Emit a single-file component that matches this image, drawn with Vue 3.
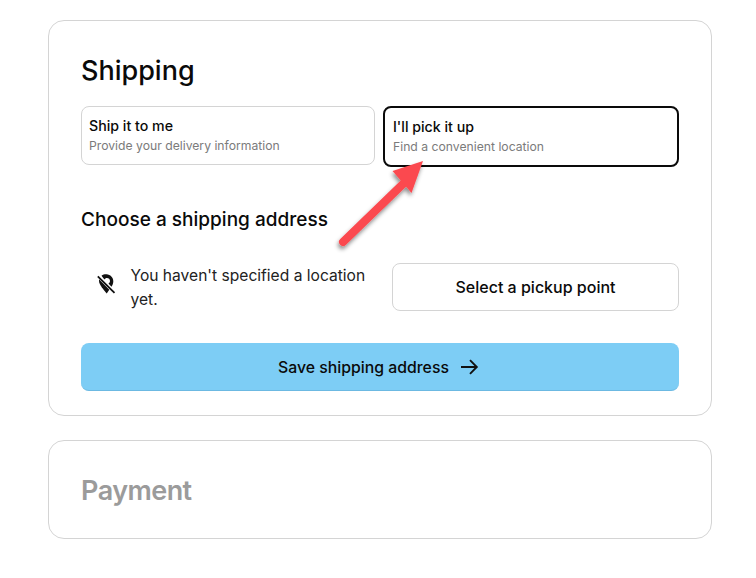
<script setup>
const options = [
  { title: 'Ship it to me', sub: 'Provide your delivery information', active: false },
  { title: "I'll pick it up", sub: 'Find a convenient location', active: true },
]
</script>

<template>
  <div class="page">
    <section class="card shipping">
      <h2 class="title">Shipping</h2>
      <div class="options">
        <div v-for="o in options" :key="o.title" class="option" :class="{ active: o.active }">
          <div class="opt-title">{{ o.title }}</div>
          <div class="opt-sub">{{ o.sub }}</div>
        </div>
      </div>
      <h3 class="subtitle">Choose a shipping address</h3>
      <div class="pickup">
        <div class="notice">
          <svg class="pin" width="20" height="20" viewBox="0 0 20 20">
            <path d="M5.500 1.800C7 .6 8.800.2 10.500.3c3.900.2 6.800 3.200 6.800 6.900 0 2-.8 3.900-1.800 5.500l-3.100-3.200c1-.5 1.600-1.500 1.600-2.600 0-1.700-1.400-3-3-3-1.100 0-2.100.6-2.600 1.500z" fill="#111" />
            <path d="M3 5.300l10.300 10.500-2.600 3.600C7.500 15.800 3.200 10.500 3 7z" fill="#111" />
            <path d="M1.800 2.300L18.500 18.800" stroke="#111" stroke-width="1.800" fill="none" />
          </svg>
          <p class="notice-text">You haven't specified a location yet.</p>
        </div>
        <button class="select-btn">Select a pickup point</button>
      </div>
      <button class="save-btn">
        <span>Save shipping address</span>
        <svg class="arrow" width="20" height="20" viewBox="0 0 20 20" fill="none" stroke="#111" stroke-width="1.900">
          <path d="M2 10h16M11 3.200L17.800 10 11 16.800" />
        </svg>
      </button>
    </section>
    <section class="card payment">
      <h2 class="title muted">Payment</h2>
    </section>
    <svg class="annotation" width="756" height="578" viewBox="0 0 756 578">
      <defs>
        <filter id="sh" x="-30%" y="-30%" width="160%" height="160%">
          <feDropShadow dx="-1" dy="3" stdDeviation="2" flood-color="#000" flood-opacity="0.45" />
        </filter>
      </defs>
      <g filter="url(#sh)">
        <path d="M343 242L404 183" stroke="#fb4a4f" stroke-width="8" stroke-linecap="round" fill="none" />
        <path d="M423 161L392.500 171 411.500 193z" fill="#fb4a4f" />
      </g>
    </svg>
  </div>
</template>

<style scoped>
.page {
  position: relative;
  width: 756px;
  height: 578px;
  box-sizing: border-box;
  padding: 20px 44px 0 48px;
  background: #fff;
  font-family: Inter, "Liberation Sans", sans-serif;
  color: #111;
  overflow: hidden;
}
.card {
  box-sizing: border-box;
  border: 1px solid #d4d4d4;
  border-radius: 16px;
}
.shipping {
  height: 396px;
  padding: 32px 32px 0;
  margin-bottom: 24px;
}
.payment {
  height: 99px;
  padding: 32px 32px 0;
}
.title {
  margin: 0;
  font-size: 27px;
  line-height: 36px;
  font-weight: 500;
  letter-spacing: 0;
  color: #0a0a0a;
}
.muted {
  color: #9b9b9b;
  font-weight: 600;
  letter-spacing: -0.55px;
}
.options {
  display: flex;
  align-items: flex-start;
  gap: 8px;
  margin-top: 17px;
}
.option {
  flex: none;
  box-sizing: border-box;
  width: 294px;
  height: 59px;
  padding: 9px 7px;
  border: 1px solid #d4d4d4;
  border-radius: 8px;
}
.option.active {
  width: 296px;
  height: 61px;
  border: 2px solid #0a0a0a;
  padding: 9px 8px;
}
.opt-title {
  font-size: 14.200px;
  line-height: 19px;
  font-weight: 500;
  color: #0a0a0a;
}
.opt-sub {
  margin-top: 2px;
  font-size: 12.200px;
  line-height: 18px;
  color: #7b7b7b;
}
.subtitle {
  margin: 0;
  margin-top: 39px;
  font-size: 19px;
  line-height: 28px;
  font-weight: 500;
  letter-spacing: 0.02px;
  color: #0a0a0a;
}
.pickup {
  display: flex;
  align-items: center;
  gap: 8px;
  height: 48px;
  margin-top: 29px;
}
.notice {
  flex: 1;
  display: flex;
  align-items: center;
  gap: 14.500px;
  padding-left: 15px;
  min-width: 0;
}
.pin {
  flex: none;
  margin-bottom: 6px;
}
.notice-text {
  margin: 0;
  padding-top: 2px;
  font-size: 15.600px;
  line-height: 24px;
  color: #222;
}
.select-btn {
  flex: none;
  width: 287px;
  height: 48px;
  background: #fff;
  border: 1px solid #d4d4d4;
  border-radius: 8px;
  font: 500 16px Inter, "Liberation Sans", sans-serif;
  color: #0a0a0a;
}
.save-btn {
  display: flex;
  align-items: center;
  justify-content: center;
  gap: 10px;
  width: 100%;
  height: 48px;
  margin-top: 32px;
  padding: 1px 0 0;
  background: #7dcdf5;
  border: 0;
  border-bottom: 1px solid #6cb9e2;
  border-radius: 8px;
  font: 500 15.800px Inter, "Liberation Sans", sans-serif;
  color: #0a0a0a;
}
.arrow {
  margin-right: 3px;
}
.annotation {
  position: absolute;
  left: 0;
  top: 0;
  pointer-events: none;
}
</style>
